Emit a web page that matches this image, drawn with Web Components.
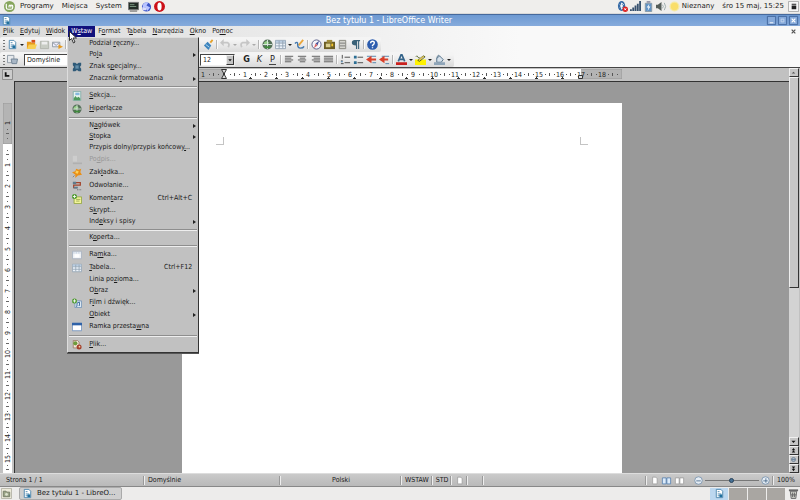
<!DOCTYPE html>
<html lang="pl">
<head>
<meta charset="utf-8">
<title>Bez tytułu 1 - LibreOffice Writer</title>
<style>
  html, body { margin: 0; height: 100%; }
  body {
    display: flex; overflow: hidden; color: #1a1a1a; background: #c0c0c0;
    --wide: 7px/13px "DejaVu Sans", sans-serif;
    --narrow: 7px/11px "DejaVu Sans Condensed", "DejaVu Sans", sans-serif;
    --face: #c1c1c1;
    font: var(--wide);
  }
</style>
</head>
<body>
<desktop-screen></desktop-screen>
<script>
function define(name, html, setup) {
  const tpl = document.createElement('template');
  tpl.innerHTML = html;
  customElements.define(name, class extends HTMLElement {
    connectedCallback() {
      if (this.shadowRoot) return;
      const root = this.attachShadow({ mode: 'open' });
      root.append(tpl.content.cloneNode(true));
      if (setup) setup(this, root);
    }
  });
}

const page = '<path fill="#fff" stroke="#4b86ad" d="M2.5 1.5h5l2 2v7h-7z"/>';
const icons = {
  foot: '<circle cx="6" cy="6" r="6" fill="#86a55c"/><path fill="none" stroke="#fff" stroke-width="1.3" d="M2.5 3v4q0 2 2 2h3q2 0 2-2V5.5q0-1-1-1t-1 1V7M7.500 5.500q0-1-1-1t-1 1V7"/>',
  term: '<path fill="#222c26" stroke="#777" d="M.5 1.500h11v8H.5z"/><path stroke="#7c9a83" d="M2 4h5M2 6h7"/><path stroke="#555" d="M2 11h8"/>',
  web: '<circle cx="6" cy="6.500" r="5" fill="#3c55c8"/><path fill="#b9c4ff" d="M2 4q3-4 6-2L6 5l4 2-3 4-2-4-3 1z"/><path fill="#d8dbfa" d="M1 7h5v3H2z"/>',
  opera: '<ellipse cx="6" cy="6" rx="6" ry="5.900" fill="#cc1018"/><ellipse cx="6" cy="6" rx="2.300" ry="4.300" fill="#fff"/>',
  bt: '<ellipse cx="5" cy="5.500" rx="4" ry="5.500" fill="#356aa6"/><path fill="none" stroke="#fff" d="M3 4l4 3-2 2V2l2 2-4 3"/><circle cx="9" cy="9" r="3" fill="#d22"/><path stroke="#fff" d="M8 8l2 2M10 8l-2 2"/>',
  signal: '<path fill="#37516e" d="M0 9h2v2H0zM2.500 7h2v4h-2zM5 5h2v6H5zM7.500 3h2v8h-2zM10 0h2v11h-2z"/>',
  batt: '<path fill="#6193c6" stroke="#8899a5" d="M2.500 2.500h7v9h-7z"/><path fill="#99a" d="M4 0h4v2H4z"/><path fill="#fff" d="M7 3L4 7h2l-1 4 3-5H6z"/>',
  sound: '<path fill="#555d59" d="M0 4h2l4-3v10L2 8H0z"/><path fill="none" stroke="#9aa" d="M7 4q2 2 0 4M9 2q3 4 0 8"/>',
  sun: '<circle cx="6" cy="6" r="5.500" fill="#f5e9a4"/><circle cx="6" cy="6" r="4" fill="#f9de6a"/>',
  note: '<path fill="#f7f7f7" stroke="#aaa" d="M.5.5h11v11H.5z"/><path fill="#222" d="M4 3h5v1H4zM4 5h5v4H4z"/>',
  writer: page + '<path stroke="#4b86ad" d="M4 4h2M4 6.500h4M4 8.500h4"/><path fill="#1f6f9f" d="M6 7h3v3H6z"/>',
  open: '<path fill="#e79a1c" d="M1 3h4l1 1h4v7H1z"/><path fill="#f8cf53" d="M3 6h9l-2 5H1z"/><path fill="#d8501a" d="M6 1h4v3H6z"/>',
  save: '<path fill="#c8ccc4" stroke="#b0b3ac" d="M1.500 2.500h9v8h-9z"/><path fill="#eee" d="M3 3h6v3H3z"/>',
  mail: '<path fill="#eef" stroke="#8e979f" d="M.5 3.500h8v5h-8z"/><path fill="none" stroke="#8e979f" d="M1 4l3.500 3L8 4"/><path fill="#e79a1c" d="M7 6l5 2.500L7 11z"/>',
  print: '<path fill="#889" d="M1 5h10v4H1z"/><path fill="#fff" stroke="#889" d="M3.500 1.500h5v4h-5z"/>',
  brush: '<path stroke="#e4a12a" stroke-width="2" d="M10.500 1L8 4"/><path fill="#3c83bd" d="M5 3l4 4-3 5-5-5z"/><path stroke="#b8dcf2" d="M3 6l4 3"/>',
  undo: '<path fill="none" stroke="#c6c6c6" stroke-width="2" d="M3 4h5q3 1 1 5"/><path fill="#c6c6c6" d="M0 4l4-4v8z"/>',
  redo: '<path fill="none" stroke="#c6c6c6" stroke-width="2" d="M9 4H4Q1 5 3 9"/><path fill="#c6c6c6" d="M12 4L8 0v8z"/>',
  globe: '<circle cx="6" cy="6" r="5.500" fill="#56705a"/><path fill="#93cf86" d="M2 4l3-2 3 2-2 2-3 1z"/><path stroke="#dceadf" d="M1 6h10M6 1v10"/><path stroke="#3e8c3a" stroke-width="2" d="M3 9h6"/>',
  table: '<path fill="#edf3fa" stroke="#93a3b3" d="M.5 1.500h11v9H.5z"/><path fill="#b9cde2" d="M1 2h10v2H1z"/><path stroke="#93a3b3" d="M1 4.500h10M1 7.500h10M4.500 2v8M8.500 2v8"/>',
  pencil: '<path stroke="#e9a63c" stroke-width="2" d="M10 1L5 7"/><path fill="none" stroke="#4177ad" stroke-width="1.500" d="M1 5q3-3 3 1t3 4 4-2"/>',
  compass: '<circle cx="6" cy="6" r="5" fill="#f4f5fb" stroke="#565b85"/><path fill="#4a5398" d="M9 2L7 7 5 5z"/><path fill="#d66" d="M3 10l2-5 2 2z"/>',
  gallery: '<path fill="#6b5d24" d="M0 3h12v8H0z"/><path fill="#a08c3d" d="M3 1h6v3H3z"/><path fill="#dbd08f" d="M2 5h5v4H2z"/><path fill="#f3c52d" d="M8 5h2v3H8z"/>',
  data: '<path fill="#d5d5cf" stroke="#84847c" d="M2.500 1.500h7v9h-7z"/><path stroke="#777" d="M3 4.500h6M3 7.500h6"/>',
  para: '<path fill="#3a6278" d="M5 1h6v1.500h-1V11H8.800V2.500h-1V11H6.500V7Q2 7 2 4t3-3z"/>',
  help: '<circle cx="6" cy="6" r="5.800" fill="#2c5cae"/><path fill="none" stroke="#fff" stroke-width="1.500" d="M4 4.500q0-2 2-2t2 1.700T6 7v.8M6 9v1.200"/>',
  styles: '<path fill="#e6e9ec" stroke="#8c98a4" d="M.5 1.500h7v8h-7z"/><path fill="#a9b7c6" stroke="#708294" d="M4.500 5.500h7l-1 5h-5z"/>',
  left: '<path stroke="#555" d="M1 2.500h9M1 4.500h7M1 6.500h9M1 8.500h7"/>',
  center: '<path stroke="#555" d="M1 2.500h9M3 4.500h6M1 6.500h9M3 8.500h6"/>',
  right: '<path stroke="#555" d="M2 2.500h9M4 4.500h7M2 6.500h9M4 8.500h7"/>',
  justify: '<path stroke="#555" d="M1 2.500h10M1 4.500h10M1 6.500h10M1 8.500h10"/>',
  numlist: '<path stroke="#444" d="M5 3.500h6M5 9.500h6M2.500 1v4M1 7.500h2M1 10.500h3"/><path stroke="#3c7fb3" d="M1 8.500h2"/>',
  bullist: '<path stroke="#444" d="M5 3.500h6M5 9.500h6"/><path fill="#2b6e94" d="M1 2h3v3H1zM1 8h3v3H1z"/>',
  indent: '<path stroke="#4c7faa" d="M1 2.500h10M7 9.500h4"/><path fill="#d9402b" d="M6 2v8L0 6zM6 5h5v2H6z"/>',
  outdent: '<path stroke="#4c7faa" d="M3 2.500h8M7 10.500h4"/><path fill="#d9402b" d="M6 2v8L0 6zM6 5h4v2H6z"/>',
  color: '<path fill="none" stroke="#35648a" stroke-width="1.800" d="M2.500 8L5.500 1h1l3 7M4 5.800h4"/><path fill="#c9211e" d="M0 9h12v3H0z"/>',
  mark: '<path fill="#fff200" d="M0 6h12v6H0z"/><path fill="none" stroke="#4c5a1d" d="M1 3q1-2 2 0t2 1M3 7l6-5 2 1-6 5z"/><path fill="#d7b84e" d="M4 6l5-4 1 1-5 4z"/>',
  bucket: '<path fill="#d5e0ea" stroke="#4e6c85" d="M3 5l3-3 4 4-2 3H3z"/><path fill="none" stroke="#4e6c85" d="M3 5q1-5 3-3"/><path fill="#8fa5b8" d="M0 9h12v3H0z"/>',
  puzzle: '<path fill="#2f5a78" d="M1 1h3l2 1.500L8 1h3v3L9.500 6 11 8v3H8L6 9.500 4 11H1V8l1.500-2L1 4z"/><path fill="#6590ab" d="M4 4h4v4H4z"/>',
  section: '<path fill="#e8f4ee" stroke="#7ca9a4" d="M1.500.5h9v11h-9z"/><path fill="#4e9a5c" d="M2 9l2-3 2 2 2-1 2 2v2H2z"/><path fill="#86b7dc" d="M4 2h5v3H4z"/>',
  sign: '<path fill="#cdcdcd" d="M1 1h5v7H1z"/><path fill="#b0b0b0" d="M1 9h11v2H1z"/>',
  pin: '<path fill="#ea8f16" d="M5 1l3 1 3-1-1 4 2 3-5 1-3 3V8L0 5l4-1z"/><path fill="#fcd25a" d="M5 3l3 1-1 3-3-1z"/><path stroke="#777" d="M3 9l-2 2"/>',
  ref: '<path fill="none" stroke="#a3452d" stroke-width="1.500" d="M2 2h8v3H2v3h4"/><path fill="#5f7c8d" d="M1 1h4v3H1zM2 7h5v2H2z"/><path stroke="#555" stroke-dasharray="1 1" d="M6 10.500h5"/>',
  comment: '<path fill="#f3f59a" stroke="#8fa13c" d="M2.500 3.500h9v8h-9z"/><path stroke="#93a44d" d="M5 6.500h5M5 8.500h4"/><circle cx="3" cy="3" r="3" fill="#4e9a2f"/><path stroke="#fff" d="M1 3h4M3 1v4"/>',
  frame: '<path fill="#eef1f5" stroke="#a3afbd" d="M.5 1.500h11v9H.5z"/><path stroke="#9db4d0" stroke-dasharray="1 1" d="M1 3.500h10"/><path fill="#fff" d="M3 5h6v4H3z"/>',
  film: '<path fill="#dbe8f4" stroke="#7192b5" d="M3.500 3.500h8v8h-8z"/><path fill="none" stroke="#2c5f94" d="M6 10V6l3-1v4M5 10h1M8 9h1"/><circle cx="3" cy="3.500" r="3" fill="#4e9a2f"/><path stroke="#fff" d="M1 3.500h4M3 1.500v4"/>',
  float: '<path fill="#fff" stroke="#6d8fbd" d="M.5 1.500h11v9H.5z"/><path fill="#2f62a8" d="M0 1h12v3H0z"/>',
  file: '<path fill="#f2e5d8" stroke="#9a7963" d="M1.500.5h5l2 2v7h-7z"/><circle cx="4" cy="4" r="2.500" fill="#6e9c3b"/><circle cx="8.500" cy="8.500" r="3" fill="#a5402b"/><circle cx="9" cy="8" r="1" fill="#f5d4ae"/>',
  single: '<path fill="#fff" stroke="#999" d="M3.500 1.500h4l2 2v7h-6z"/>',
  multi: '<path fill="#dcebfa" stroke="#4c79ab" d="M.5 2.500h5v8h-5zM6.500 2.500h5v8h-5z"/>',
  book: '<path fill="#fff" stroke="#999" d="M.5 2.500h5v8h-5zM6.500 2.500h5v8h-5z"/>',
  minus: '<circle cx="6" cy="6" r="5" fill="#e6edf4" stroke="#6c8aa8"/><path stroke="#34597e" d="M3 6.500h6"/>',
  plus: '<circle cx="6" cy="6" r="5" fill="#e6edf4" stroke="#6c8aa8"/><path stroke="#34597e" d="M3 6.500h6M6.500 3v6"/>',
  desk: '<path fill="#eceada" stroke="#b5b3a6" d="M.5.5h11v11H.5z"/><path fill="#9aa486" stroke="#727a66" d="M2.500 3.500h3l1 1h3v5h-7z"/><circle cx="6" cy="7" r="1.500" fill="#dfe4d2"/>',
  trash: '<path fill="#c9cbc4" stroke="#666" d="M2.500 3.500h7l-1 8h-5z"/><path stroke="#666" stroke-width="2" d="M1 2.500h10"/><path stroke="#666" d="M5 5v5M7 5v5M3 7.500h6"/>',
  min: '<path fill="#85a9da" stroke="#3f659b" d="M1.500 1.500h9v9h-9z"/><path stroke="#fff" d="M4 8.500h4"/>',
  max: '<path fill="#85a9da" stroke="#3f659b" d="M1.500 1.500h9v9h-9z"/><path fill="none" stroke="#c6d8f0" d="M4.500 4.500h3v3h-3z"/>',
  close: '<path fill="#85a9da" stroke="#3f659b" d="M1.500 1.500h9v9h-9z"/><path stroke="#fff" stroke-width="1.300" d="M4 4l4 4M8 4L4 8"/>',
  cross: '<path stroke="#555" stroke-width="1.300" d="M4 4l4 4M8 4L4 8"/>',
  corner: '<path fill="#ccc" stroke="#888" d="M.5.5h11v11H.5z"/><path fill="none" stroke="#111" stroke-width="2" d="M4 3.500v4h4"/>',
  up: '<path fill="#555" d="M3 7.500l3-3 3 3z"/>',
  down: '<path fill="#111" d="M2.500 4.500l3.500 4 3.500-4z"/>',
  dup: '<path fill="#111" d="M3 5.500l3-4 3 4zM3 9.500l3-4 3 4z"/>',
  ddown: '<path fill="#111" d="M3 2.500l3 4 3-4zM3 6.500l3 4 3-4z"/>',
  nav: '<circle cx="6" cy="6" r="3.500" fill="#a8b6c4" stroke="#4c6580"/><path stroke="#4c6580" d="M3 6h6"/>'
};
define('ui-icon', `<style>:host{display:block;flex:none;width:11px;height:11px}svg{display:block;width:100%;height:100%}</style>`,
  (el, root) => root.innerHTML += `<svg viewBox="0 0 12 12" aria-hidden="true">${icons[el.getAttribute('name')] || ''}</svg>`);

define('system-panel', `<style>
  :host{display:flex;align-items:center;height:14px;padding:0 1px 0 4px;background:#efeeec;box-sizing:border-box;border-bottom:1px solid #d9d9d9}
  nav{display:flex;align-items:center;gap:8px;flex:1} a{color:inherit;text-decoration:none}
  .launch,.tray{display:flex;align-items:center;gap:2px} .launch{margin-left:-2px} .tray{gap:2px}
  ui-icon.foot{margin-right:-3px} .time{margin:0 2px 0 6px}
</style>
<nav><ui-icon class="foot" name="foot"></ui-icon><a href="#">Programy</a><a href="#">Miejsca</a><a href="#">System</a>
<span class="launch"><ui-icon name="term"></ui-icon><ui-icon name="web"></ui-icon><ui-icon name="opera"></ui-icon></span></nav>
<div class="tray"><ui-icon name="bt"></ui-icon><ui-icon name="signal"></ui-icon><ui-icon name="batt"></ui-icon><ui-icon name="sound"></ui-icon>
<ui-icon name="sun"></ui-icon><span>Nieznany</span><time class="time">śro 15 maj, 15:25</time><ui-icon name="note"></ui-icon></div>`);

define('title-bar', `<style>
  :host{display:flex;align-items:center;height:12px;padding:0 1px;background:linear-gradient(#6d99d2,#86abdc);border-top:1px solid #46699c;box-sizing:border-box;color:#fff}
  h1{flex:1;margin:0;font:inherit;font-size:8px;line-height:11px;text-align:center}
  button{all:unset;display:block}
</style><ui-icon name="writer"></ui-icon><h1><slot></slot></h1>
<button aria-label="Minimalizuj"><ui-icon name="min"></ui-icon></button><button aria-label="Maksymalizuj"><ui-icon name="max"></ui-icon></button><button aria-label="Zamknij"><ui-icon name="close"></ui-icon></button>`);

define('bar-item', `<style>
  :host{display:block;position:relative}
  button{all:unset;display:block;padding:0 3px;line-height:11px;white-space:nowrap}
  :host([open]) button{background:#10107c;color:#fff}
  ::slotted(drop-menu){position:absolute;z-index:5;top:100%;left:-1px}
</style><button><slot></slot></button><slot name="menu"></slot>`);

define('menu-bar', `<style>
  :host{display:flex;align-items:center;height:11px;font:var(--narrow)}
  .end{margin-left:auto;padding-right:1px} button{all:unset;display:block}
</style><slot></slot><button class="end" aria-label="Zamknij dokument"><ui-icon name="cross"></ui-icon></button>`);

define('drop-menu', `<style>
  :host{display:block;width:132px;box-sizing:border-box;padding-bottom:1px;color:#1a1a1a;background:var(--face);border:1px solid;border-color:#ddd #333 #333 #ddd;box-shadow:0 1px 0 #555}
</style><slot></slot>`);

define('menu-row', `<style>
  :host{display:block}
  button{all:unset;box-sizing:border-box;display:flex;align-items:center;width:100%;height:11px;padding:0 6px 0 4px;line-height:11px;white-space:nowrap}
  :host([icon]) button{height:13px}
  ui-icon{width:10px;height:10px}
  .label{flex:1;margin-left:7px}
  :host([disabled]) button{color:#989898}
  .arrow{display:none;border:2px solid transparent;border-left:3px solid #222;border-right:0;margin-right:-4px}
  :host([sub]) .arrow{display:block}
</style><button><ui-icon></ui-icon><span class="label"><slot></slot></span><slot name="key"></slot><i class="arrow"></i></button>`,
  (el, root) => {
    const icon = document.createElement('ui-icon');
    icon.setAttribute('name', el.getAttribute('icon') || '');
    root.querySelector('ui-icon').replaceWith(icon);
    if (el.hasAttribute('disabled')) root.querySelector('button').disabled = true;
  });
define('menu-line', `<style>:host{display:flex;align-items:center;height:5px;padding:0 1px}hr{flex:1;margin:0;border:0;border-top:1px solid #8e8e8e;border-bottom:1px solid #eee}</style><hr>`);

define('tool-bar', `<style>
  :host{display:flex;width:max-content;align-items:center;gap:2px;height:15px;padding:0 3px;box-sizing:border-box;border-radius:2px;background:linear-gradient(#f4f4f4 20%,#dadada)}
  .grip{width:2px;height:10px;background:repeating-linear-gradient(#777 0 1px,transparent 1px 3px)}
</style><span class="grip"></span><slot></slot>`);
define('tool-button', `<style>:host{display:block}button{all:unset;display:block;width:11px;text-align:center;font:bold 9px/11px "DejaVu Sans Condensed","DejaVu Sans",sans-serif;color:#222}
  :host([look=italic]) button{font-style:italic;font-weight:normal}:host([look=under]) button{font-weight:normal;border-bottom:1px solid #444;width:7px;line-height:9px;margin:0 2px}</style><button><slot></slot></button>`,
  (el, root) => {
    const name = el.getAttribute('icon');
    const b = root.querySelector('button');
    b.setAttribute('aria-label', el.getAttribute('label') || name);
    if (name) b.innerHTML = `<ui-icon name="${name}"></ui-icon>`;
  });
define('tool-arrow', `<style>:host{display:block;width:4px}button{all:unset;display:block;border:2px solid transparent;border-top-color:#222;border-bottom:0}:host([dim]) button{border-top-color:#aaa}</style><button aria-label="Więcej"></button>`);
define('tool-line', `<style>:host{display:block;width:1px;height:9px;background:#b5b5b5;border-right:1px solid #fafafa}</style>`);
define('tool-select', `<style>
  :host{display:block;position:relative;height:12px;box-sizing:border-box;border:1px solid;border-color:#444 #eee #eee #444;background:#fff}
  label{display:flex;height:10px}
  select{appearance:none;flex:1;min-width:0;margin:0;padding:0 2px;border:0;outline:0;background:none;color:#222;font:var(--narrow);line-height:10px;height:10px}
  i{flex:none;width:8px;box-sizing:border-box;background:#c4c4c4;border:1px solid;border-color:#eee #333 #333 #eee}
  ui-icon{width:6px;height:8px}
</style><label><select><option></option></select><i><ui-icon name="down"></ui-icon></i></label>`,
  (el, root) => {
    root.querySelector('option').textContent = el.getAttribute('value');
    root.querySelector('select').setAttribute('aria-label', el.getAttribute('label'));
  });

const unit = 21;
const txt = 'font-family="DejaVu Sans Condensed, DejaVu Sans, sans-serif" font-size="7" fill="#222" text-anchor="middle"';
define('width-ruler', `<style>:host{display:flex;justify-content:center}svg{display:block;flex:none}</style>`, (el, root) => {
  let s = '<rect width="440" height="10" fill="#b4b4b4" stroke="#999"/><rect x="42" width="357" height="10" fill="#fff"/>';
  for (let n = -1; n <= 18; n++) {
    const x = 42 + unit * n;
    if (n) s += `<text x="${x}" y="8" ${txt}>${Math.abs(n)}</text>`;
    s += `<path stroke="#555" d="M${x + 6} 5.500h1M${x + 10.5} 4v3M${x + 15} 5.500h1"/>`;
  }
  for (let x = 68; x < 399; x += 26) s += `<path stroke="#333" d="M${x - 1} 9.500h3M${x + .5} 8v2"/>`;
  s += '<path fill="#ddd" stroke="#333" d="M39.500.5h5L42.500 4v2l2 3.500h-5l2-3.500V4zM396.500 6.500h4v3h-4z"/>';
  root.innerHTML += `<svg width="440" height="10">${s}</svg>`;
});
define('height-ruler', `<style>:host{display:block;overflow:hidden;min-height:0}svg{display:block}</style><svg width="9" height="10"></svg>`, (el, root) => {
  const svg = root.querySelector('svg');
  new ResizeObserver(() => {
    const h = el.clientHeight;
    let s = `<rect width="9" height="41" fill="#b4b4b4" stroke="#999"/><rect y="41" width="9" height="${h}" fill="#fff"/>`;
    for (let n = -1; 41 + unit * n < h - 6; n++) {
      const y = 41 + unit * n;
      if (n) s += `<text transform="translate(7 ${y}) rotate(-90)" ${txt}>${Math.abs(n)}</text>`;
      s += `<path stroke="#666" d="M4 ${y + 6.5}h1M3 ${y + 10.5}h3M4 ${y + 15.5}h1"/>`;
    }
    svg.setAttribute('height', h);
    svg.innerHTML = s;
  }).observe(el);
});

define('paper-sheet', `<style>
  :host{display:flex;justify-content:space-between;align-items:flex-start;width:100%;max-width:440px;box-sizing:border-box;padding:34px;background:#fff}
  i{width:7px;height:7px;border-bottom:1px solid #c4c4c4} i:first-of-type{border-right:1px solid #c4c4c4} i:last-of-type{border-left:1px solid #c4c4c4}
</style><i></i><i></i>`);

define('scroll-column', `<style>
  :host{display:flex;flex-direction:column;box-sizing:border-box;background:#d3d3d3}
  button,.thumb{all:unset;display:block;box-sizing:border-box;flex:none;height:9px;background:#c6c6c6;border:1px solid;border-color:#f0f0f0 #333 #333 #eee}
  .thumb{flex:0 0 52%} .space{flex:1} ui-icon{width:7px;height:7px}
</style><button aria-label="W górę"><ui-icon name="up"></ui-icon></button><span class="thumb"></span><span class="space"></span>
<button aria-label="W dół"><ui-icon name="down"></ui-icon></button><button aria-label="Poprzednia strona"><ui-icon name="dup"></ui-icon></button><button aria-label="Nawigacja"><ui-icon name="nav"></ui-icon></button><button aria-label="Następna strona"><ui-icon name="ddown"></ui-icon></button>`);

define('status-cell', `<style>:host{display:block;box-sizing:border-box;padding:0 3px;border-left:1px solid #eee;box-shadow:-1px 0 0 #999;line-height:9px;height:9px;white-space:nowrap}</style><slot></slot>`);
define('status-bar', `<style>
  :host{display:flex;align-items:center;height:14px;box-sizing:border-box;border-top:1px solid #ddd;border-bottom:1px solid #888;background:linear-gradient(#cacaca,#b9b9b9);font:var(--narrow)}
  .first{flex:0 0 18%;padding-left:6px;box-sizing:border-box} .style{flex:0 0 17%} .lang{flex:0 0 121px;text-align:center}
  .mode{flex:0 0 29px} .std{flex:0 0 18px} .doc{flex:0 0 16px} .sig{flex:0 0 16px} .rest{flex:1} ui-icon{width:9px;height:9px} .views{display:flex;gap:2px}
  .zoom{display:flex;align-items:center;gap:2px;margin:0 3px 0 6px} button{all:unset;display:block}
  input{appearance:none;width:54px;height:9px;margin:0;background:linear-gradient(#777,#777) center/100% 1px no-repeat}
  input::-webkit-slider-thumb{appearance:none;width:5px;height:5px;border-radius:50%;background:#467094;border:1px solid #28425a}
  .wide{width:11px}
</style><span class="first">Strona 1 / 1</span><status-cell class="style">Domyślnie</status-cell><status-cell class="lang">Polski</status-cell>
<status-cell class="mode">WSTAW</status-cell><status-cell class="std">STD</status-cell><status-cell class="doc"><ui-icon name="single"></ui-icon></status-cell><status-cell class="sig"></status-cell><status-cell class="rest"></status-cell>
<status-cell><span class="views"><ui-icon name="single"></ui-icon><ui-icon class="wide" name="multi"></ui-icon><ui-icon class="wide" name="book"></ui-icon></span></status-cell>
<span class="zoom"><button aria-label="Pomniejsz"><ui-icon name="minus"></ui-icon></button><input type="range" aria-label="Powiększenie" value="50"><button aria-label="Powiększ"><ui-icon name="plus"></ui-icon></button></span>
<status-cell>100%&nbsp;</status-cell>`);

define('task-bar', `<style>
  :host{display:flex;align-items:center;gap:7px;height:13px;padding:0 1px;background:#edeceb}
  button{all:unset;display:flex;align-items:center;gap:4px;height:11px;padding:0 6px 0 2px;border:1px solid #aaa;border-radius:2px;background:#cfcfcf;line-height:11px}
  .pager{display:grid;grid-template-columns:repeat(4,18px);gap:1px;height:12px;margin-left:auto;margin-right:-4px}
  .pager a{background:#a9a6a2;display:flex;justify-content:center} .pager a:first-child{background:#bcd7ef}
</style><ui-icon name="desk"></ui-icon><button><ui-icon name="writer"></ui-icon>Bez tytułu 1 - LibreO...</button>
<nav class="pager"><a href="#" aria-label="1"><ui-icon name="writer"></ui-icon></a><a href="#" aria-label="2"></a><a href="#" aria-label="3"></a><a href="#" aria-label="4"></a></nav><ui-icon name="trash"></ui-icon>`);

define('mouse-pointer', `<style>:host{display:block;position:absolute;z-index:9;left:1px;top:5px}svg{display:block}</style><svg width="9" height="13" viewBox="0 0 9 13"><path fill="#fff" stroke="#333" d="M.5.500v9l2-2 2 4.500 1.500-1-2-4h3.500z"/></svg>`);

const tools = list => list.split(' ').map(t =>
  t === '|' ? '<tool-line></tool-line>' : t === 'v' ? '<tool-arrow></tool-arrow>' : t === 'd' ? '<tool-arrow dim></tool-arrow>' : `<tool-button icon="${t}"></tool-button>`).join('');

define('desktop-screen', `<style>
  :host{flex:1;min-width:0;display:flex;flex-direction:column}
  .chrome{background:linear-gradient(90deg,#dadada,#f9f9f9 65%);border-bottom:1px solid #444}
  .work{flex:1;min-height:0;display:grid;grid-template:13px minmax(0,1fr)/14px minmax(0,1fr) 11px;background:var(--face)}
  .corner{margin:1px 0 0 2px} width-ruler{margin:1px 0 0 1px}
  scroll-column{grid-column:3;grid-row:1/3;margin-right:1px}
  height-ruler{grid-column:1;grid-row:2;margin:22px 2px 0 3px}
  .canvas{display:flex;justify-content:center;align-items:stretch;padding-top:21px;background:#999;border:1px solid #333;border-width:1px 0 0 1px}
  .spacer{width:1px} .name{width:76px;margin-left:4px} .face{width:96px} .size{width:35px;margin-right:4px}
  u{text-decoration-thickness:1px}
</style>
<system-panel></system-panel>
<title-bar>Bez tytułu 1 - LibreOffice Writer</title-bar>
<div class="chrome">
<menu-bar>
 <bar-item><u>P</u>lik</bar-item><bar-item><u>E</u>dytuj</bar-item><bar-item><u>W</u>idok</bar-item>
 <bar-item open>W<u>s</u>taw<mouse-pointer slot="menu"></mouse-pointer>
  <drop-menu slot="menu">
   <menu-row>Podział <u>r</u>ęczny...</menu-row><menu-row sub>Po<u>l</u>a</menu-row><menu-row icon="puzzle">Znak s<u>p</u>ecjalny...</menu-row><menu-row sub>Znacznik <u>f</u>ormatowania</menu-row>
   <menu-line></menu-line>
   <menu-row icon="section"><u>S</u>ekcja...</menu-row><menu-row icon="globe"><u>H</u>iperłącze</menu-row>
   <menu-line></menu-line>
   <menu-row sub>N<u>a</u>główek</menu-row><menu-row sub><u>S</u>topka</menu-row><menu-row>Przypis dolny/przypis końcowy<u>.</u>..</menu-row>
   <menu-row icon="sign" disabled>Po<u>d</u>pis...</menu-row><menu-row icon="pin">Zak<u>ł</u>adka...</menu-row><menu-row icon="ref">Odwołanie...</menu-row>
   <menu-row icon="comment">Komen<u>t</u>arz<span slot="key">Ctrl+Alt+C</span></menu-row><menu-row>S<u>k</u>rypt...</menu-row><menu-row sub>Ind<u>e</u>ksy i spisy</menu-row>
   <menu-line></menu-line>
   <menu-row>K<u>o</u>perta...</menu-row>
   <menu-line></menu-line>
   <menu-row icon="frame">Ra<u>m</u>ka...</menu-row><menu-row icon="table"><u>T</u>abela...<span slot="key">Ctrl+F12</span></menu-row><menu-row>Linia po<u>z</u>ioma...</menu-row><menu-row sub>O<u>b</u>raz</menu-row>
   <menu-row icon="film">F<u>i</u>lm i dźwięk...</menu-row><menu-row sub><u>O</u>biekt</menu-row><menu-row icon="float">Ramka przesta<u>w</u>na</menu-row>
   <menu-line></menu-line>
   <menu-row icon="file"><u>P</u>lik...</menu-row>
  </drop-menu></bar-item>
 <bar-item>F<u>o</u>rmat</bar-item><bar-item>T<u>a</u>bela</bar-item><bar-item><u>N</u>arzędzia</bar-item><bar-item><u>O</u>kno</bar-item><bar-item>Po<u>m</u>oc</bar-item>
</menu-bar>
<tool-bar>${tools('writer v open save mail | writer | save print data | help para brush writer save v')}<span class="spacer"></span>${tools('brush | undo d redo d | globe table v pencil | compass gallery data para | help')}</tool-bar>
<tool-bar>${tools('styles')}<tool-select class="name" value="Domyślnie" label="Styl"></tool-select><tool-select class="face" value="Times New Roman" label="Czcionka"></tool-select><tool-select class="size" value="12" label="Rozmiar"></tool-select>
<tool-button label="Pogrubienie">G</tool-button><tool-button look="italic" label="Kursywa">K</tool-button><tool-button look="under" label="Podkreślenie">P</tool-button>
${tools('| left center right justify | numlist bullist indent outdent | color v mark v bucket v')}</tool-bar>
</div>
<div class="work">
 <ui-icon class="corner" name="corner"></ui-icon><width-ruler></width-ruler><scroll-column></scroll-column>
 <height-ruler></height-ruler><div class="canvas"><paper-sheet></paper-sheet></div>
</div>
<status-bar></status-bar>
<task-bar></task-bar>`);
</script>
</body>
</html>
